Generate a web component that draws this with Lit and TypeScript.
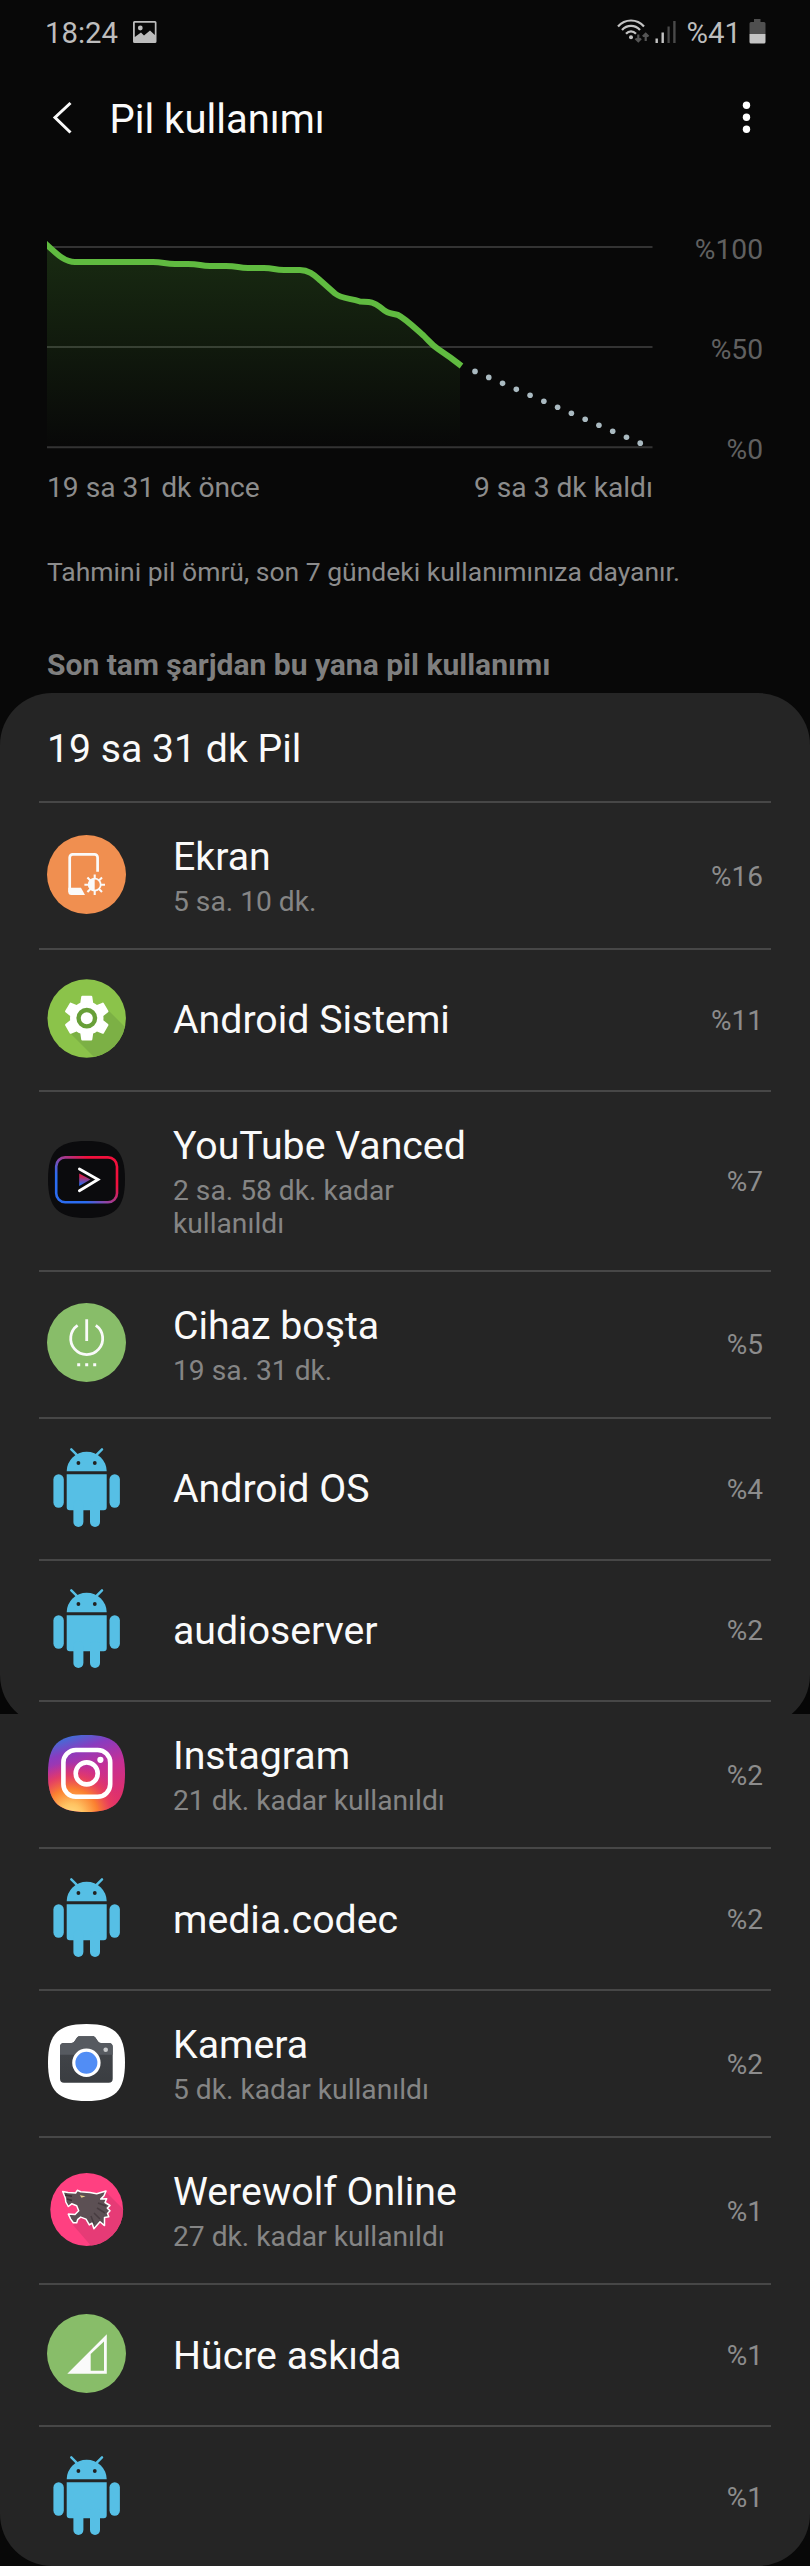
import { LitElement, html, svg, css, nothing } from 'lit';
import type { SVGTemplateResult } from 'lit';
import { customElement, property } from 'lit/decorators.js';
import { classMap } from 'lit/directives/class-map.js';

interface UsageItem {
  icon: string;
  name: string;
  detail?: string;
  percent: number;
}

const ITEMS: UsageItem[] = [
  { icon: 'screen', name: 'Ekran', detail: '5 sa. 10 dk.', percent: 16 },
  { icon: 'system', name: 'Android Sistemi', percent: 11 },
  { icon: 'vanced', name: 'YouTube Vanced', detail: '2 sa. 58 dk. kadar kullanıldı', percent: 7 },
  { icon: 'idle', name: 'Cihaz boşta', detail: '19 sa. 31 dk.', percent: 5 },
  { icon: 'android', name: 'Android OS', percent: 4 },
  { icon: 'android', name: 'audioserver', percent: 2 },
  { icon: 'instagram', name: 'Instagram', detail: '21 dk. kadar kullanıldı', percent: 2 },
  { icon: 'android', name: 'media.codec', percent: 2 },
  { icon: 'camera', name: 'Kamera', detail: '5 dk. kadar kullanıldı', percent: 2 },
  { icon: 'werewolf', name: 'Werewolf Online', detail: '27 dk. kadar kullanıldı', percent: 1 },
  { icon: 'cell', name: 'Hücre askıda', percent: 1 },
  { icon: 'android', name: '', percent: 1 },
];

const SQUIRCLE = 'M39.5 1C68 1 78 11 78 39.5S68 78 39.5 78 1 68 1 39.5 11 1 39.5 1Z';

// All icons share a 79x79 box
const ICONS: Record<string, SVGTemplateResult> = {
  screen: svg`
    <circle cx="39.5" cy="39.5" r="39.5" fill="#f08f50"/>
    <path d="M50.6 36.8V22.4a3 3 0 0 0-3-3H25.7a3 3 0 0 0-3 3V57" fill="none" stroke="#fafafa" stroke-width="2.7"/>
    <path d="M21.3 52.7H34l4 7.3H24.3a3 3 0 0 1-3-3Z" fill="#fafafa"/>
    <circle cx="47.7" cy="49.7" r="6" fill="none" stroke="#fafafa" stroke-width="1.8"/>
    <path d="M47.7 43.5a6.2 6.2 0 0 0 0 12.4Z" fill="#fafafa"/>
    <path d="M47.7 39.4v4M47.7 56v4M37.4 49.7h4M54 49.7h4M40.4 42.4l3 3M52 54l3 3M40.4 57l3-3M52 45.4l3-3" stroke="#fafafa" stroke-width="2.1"/>
  `,
  system: svg`
    <clipPath id="disc"><circle cx="39.7" cy="39.5" r="39.2"/></clipPath>
    <circle cx="39.7" cy="39.5" r="39.2" fill="#8bc34a"/>
    <path d="M59 29L85 55V85H54L22 53Z" fill="#7cb045" clip-path="url(#disc)"/>
    <path transform="translate(13 12.4) scale(2.23)" fill="#fff" d="M19.43 12.98c.04-.32.07-.64.07-.98s-.03-.66-.07-.98l2.11-1.65c.19-.15.24-.42.12-.64l-2-3.46c-.12-.22-.39-.3-.61-.22l-2.49 1c-.52-.4-1.08-.73-1.69-.98l-.38-2.65C14.46 2.18 14.25 2 14 2h-4c-.25 0-.46.18-.49.42l-.38 2.65c-.61.25-1.17.59-1.69.98l-2.49-1c-.23-.09-.49 0-.61.22l-2 3.46c-.13.22-.07.49.12.64l2.11 1.65c-.04.32-.07.65-.07.98s.03.66.07.98l-2.11 1.65c-.19.15-.24.42-.12.64l2 3.46c.12.22.39.3.61.22l2.49-1c.52.4 1.08.73 1.69.98l.38 2.65c.03.24.24.42.49.42h4c.25 0 .46-.18.49-.42l.38-2.65c.61-.25 1.17-.59 1.69-.98l2.49 1c.23.09.49 0 .61-.22l2-3.46c.12-.22.07-.49-.12-.64l-2.11-1.65z"/>
    <circle cx="39.8" cy="39.2" r="8.2" fill="#fff" stroke="#689f38" stroke-width="4.4"/>
  `,
  vanced: svg`
    <linearGradient id="tube" x1="0" y1="1" x2="1" y2="0.2">
      <stop offset="0.3" stop-color="#2b6cf0"/>
      <stop offset="0.5" stop-color="#8f45a5"/>
      <stop offset="0.8" stop-color="#f2103c"/>
    </linearGradient>
    <linearGradient id="tri" x1="0" y1="1" x2="0" y2="0">
      <stop offset="0.1" stop-color="#2b6cf0"/>
      <stop offset="0.8" stop-color="#d8204f"/>
    </linearGradient>
    <path d="${SQUIRCLE}" fill="#0b0b0d"/>
    <rect x="9.2" y="17.4" width="60.8" height="44.8" rx="9" fill="none" stroke="url(#tube)" stroke-width="2.6"/>
    <path d="M32.2 33.5L43.5 39.5 32.2 46Z" fill="url(#tri)"/>
    <path d="M32.4 29L51 39.5 32.4 50.7" fill="none" stroke="#fff" stroke-width="2.8" stroke-linecap="round"/>
  `,
  idle: svg`
    <circle cx="39.5" cy="39.5" r="39.5" fill="#88bd69"/>
    <path d="M30.6 22.4a16 16 0 1 0 18.2 0M39.7 16.3V38" fill="none" stroke="#fafafa" stroke-width="2.8"/>
    <path d="M30.2 60.2h3v3h-3zM38.2 60.2h3v3h-3zM46.2 60.2h3v3h-3z" fill="#fafafa"/>
  `,
  android: svg`
    <g fill="#56bfe5">
      <path d="M19.7 23.2a20 19.5 0 0 1 40 0Z"/>
      <path d="M19.7 26.3h40v33a3 3 0 0 1-3 3h-34a3 3 0 0 1-3-3Z"/>
      <rect x="6.4" y="26.3" width="10.4" height="33.4" rx="5.2"/>
      <rect x="62.5" y="26.3" width="10.4" height="33.4" rx="5.2"/>
      <rect x="26.4" y="52" width="10" height="27" rx="5"/>
      <rect x="43" y="52" width="10" height="27" rx="5"/>
    </g>
    <path d="M24.3 1.3l5.5 5.6M55 1.3l-5.5 5.6" stroke="#56bfe5" stroke-width="2.4" stroke-linecap="round"/>
    <circle cx="31.4" cy="15" r="1.9" fill="#222"/>
    <circle cx="47.8" cy="15" r="1.9" fill="#222"/>
  `,
  instagram: svg`
    <linearGradient id="ig-base" x1="0.3" y1="0" x2="0.6" y2="0.9">
      <stop offset="0" stop-color="#3f6fd8"/>
      <stop offset="0.22" stop-color="#8a3bbf"/>
      <stop offset="0.55" stop-color="#c62f95"/>
      <stop offset="1" stop-color="#e0306a"/>
    </linearGradient>
    <radialGradient id="ig-glow" cx="0.3" cy="1.05" r="0.7">
      <stop offset="0" stop-color="#ffdf85"/>
      <stop offset="0.22" stop-color="#ffc362"/>
      <stop offset="0.5" stop-color="#fb8030"/>
      <stop offset="0.75" stop-color="#ea3f5b" stop-opacity="0.8"/>
      <stop offset="1" stop-color="#dd2f78" stop-opacity="0"/>
    </radialGradient>
    <path d="${SQUIRCLE}" fill="url(#ig-base)"/>
    <path d="${SQUIRCLE}" fill="url(#ig-glow)"/>
    <g fill="none" stroke="#fff" stroke-width="4.6">
      <rect x="16.4" y="16" width="46.8" height="46.8" rx="12.5"/>
      <circle cx="39.7" cy="39.4" r="11"/>
    </g>
    <circle cx="53.4" cy="25.8" r="3.1" fill="#fff"/>
  `,
  camera: svg`
    <linearGradient id="body" x1="0" y1="0" x2="0" y2="1">
      <stop offset="0" stop-color="#44474c"/>
      <stop offset="1" stop-color="#3a3d41"/>
    </linearGradient>
    <path d="${SQUIRCLE}" fill="#fff"/>
    <path d="M17 20h7.5c1.5 0 2.4-.8 3.2-2l2-3c.8-1.2 1.6-1.7 3-1.7h13c1.4 0 2.3.5 3 1.7l2 3c.8 1.2 1.7 2 3.2 2h7.8a4 4 0 0 1 4 4v31.7a4 4 0 0 1-4 4H17a4 4 0 0 1-4-4V24a4 4 0 0 1 4-4Z" fill="url(#body)"/>
    <path d="M17 20h7.5c1.5 0 2.4-.8 3.2-2l2-3c.8-1.2 1.6-1.7 3-1.7h13c1.4 0 2.3.5 3 1.7l2 3c.8 1.2 1.7 2 3.2 2h7.8a4 4 0 0 1 4 4v7.7H13V24a4 4 0 0 1 4-4Z" fill="#565a60"/>
    <circle cx="39.4" cy="39.7" r="12.6" fill="#518df5" stroke="#fff" stroke-width="3.2"/>
    <circle cx="58.7" cy="26.8" r="2.3" fill="#c9cacc"/>
  `,
  werewolf: svg`
    <clipPath id="wolf-disc"><circle cx="39.7" cy="39.5" r="36.4"/></clipPath>
    <circle cx="39.7" cy="39.5" r="36.4" fill="#ff4081"/>
    <path d="M59 22L85 48V85H52L26 55Z" fill="#e63b76" clip-path="url(#wolf-disc)"/>
    <path d="M15.7 21.5L21 22.6 28.6 23 30.3 20.3 33.7 21.8 43 22.5 49.7 23.8 59 21 57 25.8 53.7 29.1 59.7 28.7 58 32.5 63 35.5 60.3 38.1 63 40.8 60.5 43.5 61.8 46.8 57.5 47.5 57.5 55.6 53 51.8 46.9 58.8 45 53.1 42.3 54.9 39 49.1 33.7 47.1 30.8 49.3 29.7 52.8 26.3 52.8 23.7 49.1 21.3 44.1 28 44.5 31.7 40.8 29.7 35.8 24.7 33.8 21.3 36.5 18.8 32 18.3 28Z" fill="#5c5054" stroke="#fff" stroke-width="1.5" stroke-linejoin="round"/>
    <path d="M47 43l6 6M50 38l8 5M51 33l8 3M44 46l3 8" stroke="#473c40" stroke-width="1.5"/>
    <path d="M32.8 25.3l5.7 1-4 1.4Z" fill="#e6d18c"/>
    <path d="M18 25l7 1.2M20 29l5 1.5" stroke="#3c3135" stroke-width="1.5"/>
  `,
  cell: svg`
    <circle cx="39.5" cy="39.5" r="39.5" fill="#88bd69"/>
    <path fill-rule="evenodd" d="M20.3 59.7H59.8V20.2ZM43.7 56.7V40L57 27.5V56.7Z" fill="#fafafa"/>
  `,
};

@customElement('usage-row')
export class UsageRow extends LitElement {
  @property({ attribute: false }) item!: UsageItem;

  static styles = css`
    :host {
      display: block;
    }

    .row {
      box-sizing: border-box;
      display: flex;
      align-items: center;
      height: 141.6px;
      padding: 0 8px;
      border-top: 2px solid #474747;
    }

    .row.detailed {
      height: 147.2px;
    }

    .row.tall {
      height: 180px;
    }

    .icon {
      width: 79px;
      height: 79px;
      margin-bottom: 3px;
      flex-shrink: 0;
    }

    .texts {
      flex: 1;
      margin-left: 47px;
      padding-top: 1px;
    }

    .name {
      font-size: 39.25px;
      line-height: 46px;
      color: #fafafa;
    }

    .detail {
      max-width: 290px;
      margin-top: 5px;
      font-size: 28.2px;
      line-height: 33px;
      color: #858585;
    }

    .percent {
      padding-top: 1px;
      font-size: 28px;
      line-height: 33px;
      color: #8c8c8c;
    }
  `;

  render() {
    const { icon, name, detail, percent } = this.item;
    const classes = {
      row: true,
      detailed: !!detail,
      tall: (detail?.length ?? 0) > 25,
    };

    return html`
      <div class=${classMap(classes)}>
        <svg class="icon" viewBox="0 0 79 79">${ICONS[icon]}</svg>
        <div class="texts">
          <div class="name">${name}</div>
          ${detail ? html`<div class="detail">${detail}</div>` : nothing}
        </div>
        <div class="percent">%${percent}</div>
      </div>
    `;
  }
}

@customElement('battery-chart')
export class BatteryChart extends LitElement {
  static styles = css`
    :host {
      display: block;
      font-size: 28.2px;
      line-height: 33px;
    }

    .plot {
      display: flex;
      justify-content: space-between;
    }

    .graph {
      width: 606px;
      height: 220px;
    }

    .axis {
      display: flex;
      flex-direction: column;
      gap: 67px;
      margin-top: -4px;
      height: 224px;
      text-align: right;
      color: #606060;
    }

    .legend {
      display: flex;
      justify-content: space-between;
      width: 606px;
      margin-top: 14px;
      color: #8c8c8c;
    }
  `;

  render() {
    // 13 forecast dots between the current level and zero
    const dots = Array.from({ length: 13 }, (_, i) => ({
      x: 475 + i * 13.77,
      y: 371.4 + i * 5.98,
    }));
    const curve =
      'C56 253 64 262 75 262H153C163 262 165 264 175 264H188C200 264 200 266 210 266H226' +
      'C238 266 238 268 248 268H264C274 268 274 270 284 270H300C310 270 316 277 321 281' +
      'L335 293.5C342 299 350 298 360 301.5 368 302 373 301 380 307 388 314 390 313 398 315' +
      'C406 319 418 331 424 336C430 342 432 345 438 349L451 358 461.5 366';

    return html`
      <div class="plot">
        <svg class="graph" viewBox="47 237 606 220">
          <linearGradient id="fade" x1="0" y1="0" x2="0" y2="1">
            <stop offset="0" stop-color="#5cb83a" stop-opacity="0.2" />
            <stop offset="1" stop-color="#5cb83a" stop-opacity="0" />
          </linearGradient>
          <path d="M47 246h605.5v2H47zM47 346h605.5v2H47zM47 446.3h605.5v2H47z" fill="#333" />
          <path d="M47 245${curve}L460 366V447H47Z" fill="url(#fade)" />
          <path d="M45 243L47 245${curve}" fill="none" stroke="#60bb40" stroke-width="6" />
          ${dots.map((d) => svg`<circle cx=${d.x} cy=${d.y} r="2.8" fill="#aabac1"/>`)}
        </svg>
        <div class="axis">
          <span>%100</span>
          <span>%50</span>
          <span>%0</span>
        </div>
      </div>
      <div class="legend">
        <span>19 sa 31 dk önce</span>
        <span>9 sa 3 dk kaldı</span>
      </div>
    `;
  }
}

@customElement('app-root')
export class AppRoot extends LitElement {
  static styles = css`
    :host {
      display: block;
      box-sizing: border-box;
      width: 810px;
      height: 2566px;
      overflow: hidden;
      background: #080808;
      font-family: Roboto, 'Noto Sans', sans-serif;
      color: #fafafa;
    }

    .status {
      box-sizing: border-box;
      display: flex;
      align-items: center;
      height: 64px;
      padding: 2px 44px 0 45px;
      font-size: 29.3px;
      color: #bdbdbd;
    }

    .picture {
      width: 24px;
      height: 22px;
      margin: 0 auto 3px 15px;
    }

    .signals {
      width: 60px;
      height: 26px;
      margin: 0 10px 3px 0;
    }

    .battery {
      width: 17px;
      height: 25px;
      margin: 0 0 3px 8px;
    }

    .header {
      display: flex;
      align-items: center;
      height: 108px;
      padding: 0 59px 0 52px;
    }

    .back {
      width: 20px;
      height: 34px;
    }

    .title {
      flex: 1;
      margin: 0 0 0 37.5px;
      padding-top: 2px;
      font-size: 40px;
      font-weight: 400;
    }

    .more {
      width: 9px;
      height: 34px;
    }

    .chart {
      margin: 65px 47px 0;
    }

    .note {
      margin: 53px 47px 0;
      font-size: 26.5px;
      line-height: 30px;
      color: #8c8c8c;
    }

    .section {
      margin: 61px 47px 11px;
      font-size: 30px;
      font-weight: 700;
      line-height: 34px;
      color: #7f7f7f;
    }

    .card {
      position: relative;
      box-sizing: border-box;
      height: 1873px;
      padding: 0 39px;
      overflow: hidden;
      border-radius: 52px;
      background: #252525;
    }

    .total {
      box-sizing: border-box;
      height: 108px;
      padding: 33px 8px 0;
      font-size: 39.2px;
      line-height: 46px;
    }

    /* Dark seam where the first screenful of the list ends */
    .seam {
      position: absolute;
      top: 982px;
      width: 19px;
      height: 39px;
      fill: #060606;
    }

    .seam.left {
      left: 0;
    }

    .seam.right {
      right: 0;
      transform: scaleX(-1);
    }
  `;

  private _seam(side: 'left' | 'right') {
    return html`
      <svg class="seam ${side}" viewBox="0 0 19 39">
        <path d="M0 0A52 52 0 0 0 18.3 39H0Z" />
      </svg>
    `;
  }

  render() {
    return html`
      <div class="status">
        <span>18:24</span>
        <svg class="picture" viewBox="0 0 24 22">
          <path
            fill-rule="evenodd"
            fill="#bdbdbd"
            d="M1.5 0H22a1.5 1.5 0 0 1 1.5 1.5V20.5a1.5 1.5 0 0 1-1.5 1.5H1.5A1.5 1.5 0 0 1 0 20.5V1.5A1.5 1.5 0 0 1 1.5 0ZM1.8 1.8V16L8 11.5 11 14.5 17 9.5 21.800 14V1.8Z"
          />
          <circle cx="7.3" cy="7" r="2.4" fill="#bdbdbd" />
        </svg>
        <svg class="signals" viewBox="0 0 60 26">
          <g fill="none" stroke="#c4c4c4" stroke-width="2.2">
            <path d="M1 7.5C8 -0.5 20 -0.5 27 7.5" />
            <path d="M5 11C10 5.5 18 5.5 23 11" />
            <path d="M9 14.8C12 11.5 16 11.5 19 14.8" />
          </g>
          <circle cx="14" cy="18.2" r="2" fill="#c4c4c4" />
          <path
            d="M21.3 15.5V22M18.5 19.5L21.3 22.3 24 19.5M28.7 22V15M25.8 17.5L28.7 14.7 31.5 17.5"
            fill="none"
            stroke="#555"
            stroke-width="2.2"
          />
          <path d="M38.5 19.5h2.4V24h-2.4zM44.5 13.5h2.4V24h-2.4z" fill="#c4c4c4" />
          <path d="M50.5 7.5h2.2V24h-2.2zM56.2 2h2.4V24h-2.4z" fill="#4a4a4a" />
        </svg>
        <span>%41</span>
        <svg class="battery" viewBox="0 0 17 25">
          <path d="M5 0H11.5V3H15a1.5 1.5 0 0 1 1.5 1.5V15H.5V4.5A1.5 1.5 0 0 1 2 3H5Z" fill="#4f4f4f" />
          <path d="M.5 15H16.5V23a1.5 1.5 0 0 1-1.5 1.5H2A1.5 1.5 0 0 1 .5 23Z" fill="#c4c4c4" />
        </svg>
      </div>

      <div class="header">
        <svg class="back" viewBox="0 0 20 34">
          <path d="M18.5 2L3 16.5 18.5 31.5" fill="none" stroke="#fafafa" stroke-width="3" />
        </svg>
        <h1 class="title">Pil kullanımı</h1>
        <svg class="more" viewBox="0 0 9 34">
          <circle cx="4.5" cy="4.3" r="3.7" fill="#fff" />
          <circle cx="4.5" cy="16.3" r="3.7" fill="#fff" />
          <circle cx="4.5" cy="28.3" r="3.7" fill="#fff" />
        </svg>
      </div>

      <battery-chart class="chart"></battery-chart>

      <div class="note">Tahmini pil ömrü, son 7 gündeki kullanımınıza dayanır.</div>
      <div class="section">Son tam şarjdan bu yana pil kullanımı</div>

      <div class="card">
        <div class="total">19 sa 31 dk Pil</div>
        ${ITEMS.map((item) => html`<usage-row .item=${item}></usage-row>`)}
        ${this._seam('left')} ${this._seam('right')}
      </div>
    `;
  }
}

declare global {
  interface HTMLElementTagNameMap {
    'app-root': AppRoot;
    'battery-chart': BatteryChart;
    'usage-row': UsageRow;
  }
}
